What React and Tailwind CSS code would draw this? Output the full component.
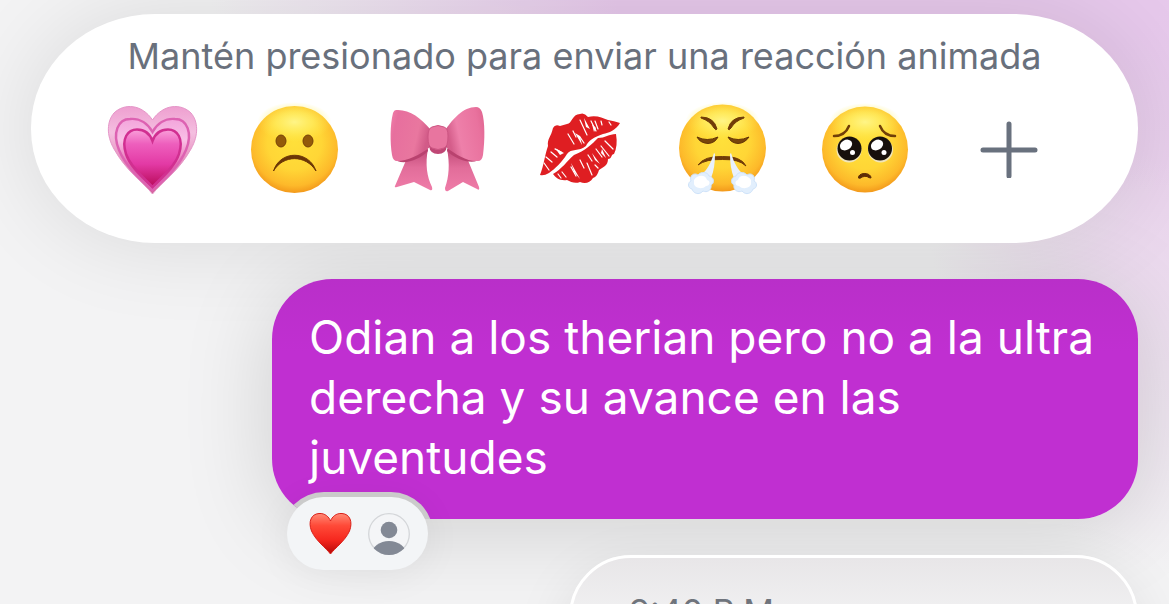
import { useState } from 'react';

function GrowingHeart() {
  return (
    <svg viewBox="87 90 130 115" className="w-[130px] h-[115px]" aria-hidden="true">
      <defs>
        <linearGradient id="gh1" x1="0" y1="0" x2="0" y2="1">
          <stop offset="0" stopColor="#ee9fd0" />
          <stop offset="0.3" stopColor="#f4bfe0" />
          <stop offset="0.6" stopColor="#e893c0" />
          <stop offset="1" stopColor="#d4659a" />
        </linearGradient>
        <linearGradient id="gh2" x1="0" y1="0" x2="0" y2="1">
          <stop offset="0" stopColor="#f3a5dc" />
          <stop offset="0.3" stopColor="#f9c0e6" />
          <stop offset="0.6" stopColor="#e876b8" />
          <stop offset="1" stopColor="#c91c70" />
        </linearGradient>
        <linearGradient id="gh3" x1="0" y1="0" x2="0" y2="1">
          <stop offset="0" stopColor="#f9a0da" />
          <stop offset="0.25" stopColor="#ee5fbd" />
          <stop offset="0.6" stopColor="#e33aa5" />
          <stop offset="1" stopColor="#b80a58" />
        </linearGradient>
      </defs>
      <path d="M152.500 194C144 183 126 171 114 149C106 135 107 121 114 113C124 103 142 104 152.500 120C163 104 181 103 191 113C198 121 199 135 191 149C179 171 161 183 152.500 194Z" fill="url(#gh1)" stroke="#e596c8" strokeWidth="1" />
      <path d="M152.500 190C144 182 127 169 119 150C112 133 118 119 130 119C140 118 148 124 152.500 132C157 124 165 118 175 119C187 119 193 133 186 150C178 169 161 182 152.500 190Z" fill="url(#gh2)" stroke="#dd62b2" strokeWidth="2.500" />
      <path d="M152.500 187C147 180 131 169 126 154C121 138 128 129.500 137 129.500C145 129.500 150 134 152.500 141C155 134 160 129.500 168 129.500C177 129.500 184 138 179 154C174 169 158 180 152.500 187Z" fill="url(#gh3)" stroke="#d12f91" strokeWidth="2.500" />
    </svg>
  );
}

function FaceGradient({ id }) {
  return (
    <>
      <radialGradient id={id} cx="0.5" cy="0.42" r="0.62">
        <stop offset="0" stopColor="#ffe03a" />
        <stop offset="0.5" stopColor="#ffd636" />
        <stop offset="0.8" stopColor="#fdb92a" />
        <stop offset="1" stopColor="#ee8a14" />
      </radialGradient>
      <radialGradient id={`${id}-shine`}>
        <stop offset="0" stopColor="#fff890" stopOpacity="0.9" />
        <stop offset="0.5" stopColor="#fff36a" stopOpacity="0.6" />
        <stop offset="1" stopColor="#ffee50" stopOpacity="0" />
      </radialGradient>
    </>
  );
}

function FrownFace() {
  return (
    <svg viewBox="235 90 120 115" className="w-[120px] h-[115px]" aria-hidden="true">
      <defs><FaceGradient id="frown" /></defs>
      <circle cx="294.500" cy="149.500" r="43.500" fill="url(#frown)" />
      <ellipse cx="294.500" cy="122" rx="37" ry="20" fill="url(#frown-shine)" />
      <g fill="#935a0a" stroke="#754006" strokeWidth="1">
        <ellipse cx="281" cy="141" rx="5" ry="6" />
        <ellipse cx="308" cy="141" rx="5" ry="6" />
      </g>
      <path d="M273.500 171C280 150 309 150 316 171C306 154.500 283 154.500 273.500 171Z" fill="#6b3606" stroke="#6b3606" strokeWidth="1" strokeLinejoin="round" />
    </svg>
  );
}

function Bow() {
  return (
    <svg viewBox="375 90 125 115" className="w-[125px] h-[115px]" aria-hidden="true">
      <defs>
        <linearGradient id="bowl" x1="0" y1="0" x2="1" y2="0.3">
          <stop offset="0" stopColor="#f27faa" />
          <stop offset="0.2" stopColor="#e76f9e" />
          <stop offset="0.75" stopColor="#e9779f" />
          <stop offset="1" stopColor="#d25b88" />
        </linearGradient>
        <linearGradient id="bowr" x1="1" y1="0" x2="0" y2="0.3">
          <stop offset="0" stopColor="#df648f" />
          <stop offset="0.25" stopColor="#e9729e" />
          <stop offset="0.75" stopColor="#ee80aa" />
          <stop offset="1" stopColor="#d45d8a" />
        </linearGradient>
        <linearGradient id="bowt" x1="0" y1="0" x2="0" y2="1">
          <stop offset="0" stopColor="#c14a78" />
          <stop offset="0.45" stopColor="#e26d9a" />
          <stop offset="1" stopColor="#ef7ca8" />
        </linearGradient>
      </defs>
      <path d="M407 158L395 186Q394 188 397 187L414 182L430 190Q433 191 432 187C427 177 425 164 428 149Z" fill="url(#bowt)" />
      <path d="M467 158L479 187Q480 191 477 189L463 182L448 191Q445 192 445 188C449 177 450 164 447 149Z" fill="url(#bowt)" />
      <path d="M394 158C400 167 420 160 428 151L427 146L396 156ZM481 158C475 166 456 160 447 151L448 146Z" fill="#b9426f" />
      <path d="M396 110C409 109 421 118 430 129L430 147C420 155 407 161 397 161Q393 161 392 155C390 142 390 125 393 113Q394 110 396 110Z" fill="url(#bowl)" />
      <path d="M476 107C463 107 453 119 446 129L446 147C456 155 468 162 478 161Q482 161 483 155C485 140 485 122 482 112Q480 107 476 107Z" fill="url(#bowr)" />
      <path d="M429 146Q430 154 438 154Q446 154 447 146Z" fill="#bf4775" />
      <path d="M432 127Q438 124 444 127Q448 128 448 136Q448 147 444 148Q438 151 432 148Q428 147 428 137Q428 128 432 127Z" fill="#e8759f" stroke="#cd5683" strokeWidth="1" />
    </svg>
  );
}

function Kiss() {
  return (
    <svg viewBox="525 90 110 115" className="w-[110px] h-[115px]" aria-hidden="true">
      <path d="M540 175C544 165 545 154 548 146C547 139 551 137 553 128Q555 124 560 126L567 124C572 124 572 114 580 114Q584 112 588 117C597 115 602 118 608 120Q614 121 620 123C616 130 609 133 603 134C594 137 588 141 586 146C579 152 571 148 567 154C562 162 555 169 549 173Q544 176 540 175Z" fill="#df1e22" />
      <path d="M553 174C562 169 567 161 574 155C585 151 592 144 598 138C605 138 609 134 616 134Q618 146 614 154C611 154 612 159 608 159C608 166 603 167 599 170C598 174 596 177 593 178C590 183 585 184 580 182C575 184 571 182 567 180C560 181 556 178 553 174Z" fill="#df1e22" />
      <g fill="none" stroke="#fff" strokeWidth="1.200" strokeLinecap="round">
        <path d="M580 120L587 135M591 121L596 131M595 121L598 129M601 121L602 125M573 131L576 137M568 134L574 144M555 149L561 152M551 152L557 157M546 157L552 162M544 163L549 170M580 137L584 143M609 122L611 125" />
        <path d="M605 141L613 149M601 146L609 156M596 149L602 157M588 155L592 161M587 163L592 175M580 160L584 168M571 167L576 176M562 172L566 177M595 165L598 168M558 174L561 178" />
      </g>
      <path d="M584 118L590 129L586 127ZM592 124L596 128L594 132ZM555 148L564 153L560 155ZM580 136L575 133L582 145ZM592 153L600 164L595 160ZM571 163L580 179L574 172ZM602 149L606 158L601 153Z" fill="#fff" />
    </svg>
  );
}

function Cloud({ flip }) {
  return (
    <g transform={flip ? 'translate(1445 0) scale(-1 1)' : undefined}>
      <path d="M714 153C711 163 707 170 702 174L711 178C714 171 715 162 715 154Z" fill="#e9f1fb" />
      <path d="M698 175C701 171 708 172 709 176C714 177 715 183 711 185C712 190 707 193 703 191C699 196 693 193 692 189C687 188 688 182 691 181C689 176 694 172 698 175Z" fill="#e2effd" stroke="#cfe3fa" strokeWidth="1" />
      <path d="M694 180C698 174 706 175 707 180C711 181 710 186 706 186C702 190 695 188 694 184Z" fill="#fff" />
    </g>
  );
}

function SteamFace() {
  return (
    <svg viewBox="663 90 120 115" className="w-[120px] h-[115px]" aria-hidden="true">
      <defs><FaceGradient id="steam" /></defs>
      <circle cx="722.500" cy="148" r="43.500" fill="url(#steam)" />
      <ellipse cx="722.500" cy="121" rx="37" ry="19" fill="url(#steam-shine)" />
      <path d="M701 117Q714 117 717 129Q716 131 714 128Q710 121 701 118ZM744 117Q731 117 728 129Q729 131 731 128Q735 121 744 118Z" fill="#713c08" stroke="#713c08" strokeWidth="1" strokeLinejoin="round" />
      <path d="M698 165Q704 156 722.500 156.500Q741 156 746 166Q739 159 722.500 159.500Q706 159 698 165Z" fill="#713c08" stroke="#713c08" strokeWidth="1" strokeLinejoin="round" />
      <path d="M697 137Q707 142 718 137Q715 143 708 143.500Q700 143 697 137ZM728 137Q738 142 749 137Q745 143 738 143.500Q731 143 728 137Z" fill="#79450b" stroke="#633506" strokeWidth="1" />
      <Cloud />
      <Cloud flip />
    </svg>
  );
}

function PleadingFace() {
  return (
    <svg viewBox="806 90 120 115" className="w-[120px] h-[115px]" aria-hidden="true">
      <defs><FaceGradient id="plead" /></defs>
      <circle cx="865" cy="149.500" r="43" fill="url(#plead)" />
      <ellipse cx="865" cy="122" rx="36" ry="19" fill="url(#plead-shine)" />
      <path d="M834 136Q845 136 849 126M895 136Q884 136 880 126" fill="none" stroke="#713f08" strokeWidth="2.500" strokeLinecap="round" />
      <g fill="#f1e5b9">
        <circle cx="849" cy="150" r="12.500" />
        <circle cx="880.500" cy="150" r="12.500" />
      </g>
      <g fill="#17100c">
        <circle cx="849.500" cy="148.500" r="12" />
        <circle cx="880" cy="148.500" r="12" />
      </g>
      <g fill="#fff">
        <ellipse cx="846" cy="145" rx="6.500" ry="5" transform="rotate(-30 846 145)" />
        <ellipse cx="877" cy="145" rx="6.500" ry="5" transform="rotate(-30 877 145)" />
        <circle cx="852.500" cy="152.500" r="2.500" />
        <circle cx="884" cy="152.500" r="2.500" />
      </g>
      <path d="M858.500 178C858 172 871 172 871 178Q869 178 867 176.500Q865 176 862 177Q860 179 858.500 178Z" fill="#5e2d06" stroke="#5e2d06" strokeWidth="1" />
    </svg>
  );
}

function RedHeart() {
  return (
    <svg viewBox="309 512 43 43" className="w-[43px] h-[43px]" aria-hidden="true">
      <defs>
        <linearGradient id="rh" x1="0" y1="0" x2="0" y2="1">
          <stop offset="0" stopColor="#ff8a76" />
          <stop offset="0.3" stopColor="#ff4a38" />
          <stop offset="0.65" stopColor="#f6281f" />
          <stop offset="1" stopColor="#b50808" />
        </linearGradient>
      </defs>
      <path d="M330.500 554C326 548 316 541 311.500 531C308 522 311 514 319 513.500C325 513 329 517 330.500 521C332 517 336 513 342 513.500C350 514 353 522 349.500 531C345 541 335 548 330.500 554Z" fill="url(#rh)" stroke="#d92019" strokeWidth="1" />
    </svg>
  );
}

function Avatar() {
  return (
    <svg viewBox="0 0 42 42" className="w-[42px] h-[42px]" aria-hidden="true">
      <defs><clipPath id="avatar-clip"><circle cx="21" cy="21" r="21" /></clipPath></defs>
      <circle cx="21" cy="21" r="20.300" fill="#f4f5f7" stroke="#d4d6d9" strokeWidth="1.300" />
      <g fill="#838995" clipPath="url(#avatar-clip)">
        <circle cx="21" cy="17" r="8.300" />
        <ellipse cx="21" cy="41" rx="17" ry="13" />
      </g>
    </svg>
  );
}

const reactions = [
  { name: 'Corazón creciente', Icon: GrowingHeart },
  { name: 'Cara triste', Icon: FrownFace },
  { name: 'Lazo', Icon: Bow },
  { name: 'Beso', Icon: Kiss },
  { name: 'Cara resoplando', Icon: SteamFace },
  { name: 'Cara suplicante', Icon: PleadingFace },
];

function ReactionPicker({ onPick }) {
  return (
    <section className="relative z-10 rounded-[124px/114px] bg-white pt-5 pb-[38px] shadow-[0_0_90px_rgba(0,0,0,0.11)]">
      <p className="text-center text-[36px] leading-[44px] text-[#69707c]">
        Mantén presionado para enviar una reacción animada
      </p>
      <div className="mt-3 grid grid-cols-7 pl-[50px] pr-[58px]">
        {reactions.map(({ name, Icon }) => (
          <button key={name} type="button" aria-label={name} onClick={() => onPick(name)} className="flex h-[115px] items-center justify-center">
            <Icon />
          </button>
        ))}
        <button type="button" aria-label="Más reacciones" className="flex h-[115px] items-center justify-center">
          <svg viewBox="0 0 60 60" className="h-[60px] w-[60px]" fill="none" stroke="#69717e" strokeWidth="5" strokeLinecap="round">
            <path d="M30 6V58M4 32H56" />
          </svg>
        </button>
      </div>
    </section>
  );
}

function Message({ children }) {
  return (
    <div className="relative mt-9 ml-[241px]">
      {/* z-20 deja la burbuja sobre la sombra del selector; su propia sombra queda debajo */}
      <div className="absolute inset-0 rounded-[60px] shadow-[0_10px_90px_rgba(0,0,0,0.15)]" />
      <div className="relative z-20 overflow-hidden rounded-[60px] bg-linear-to-b from-[#b92fc9] to-[#c02fd1] to-30%">
        <p className="pt-[28px] pr-8 pb-[32px] pl-[37px] text-[46px] leading-[60px] text-white">{children}</p>
        {/* recorte alrededor de la reacción */}
        <div className="absolute -bottom-[57px] left-[10px] h-[84px] w-[151px] rounded-[42px] bg-[#cfcfcf]" />
      </div>
      <button type="button" aria-label="Ver reacciones" className="absolute z-20 -bottom-[51px] left-[15px] flex h-[73px] w-[141px] items-center justify-between rounded-full bg-[#f3f5f7] pr-[18px] pl-[22px] shadow-[0_4px_40px_rgba(0,0,0,0.06)]">
        <RedHeart />
        <Avatar />
      </button>
    </div>
  );
}

export default function App() {
  const [, setPicked] = useState('');

  return (
    <main className="h-screen overflow-hidden bg-[#f3f3f4] bg-[radial-gradient(ellipse_58%_34%_at_76%_0%,#e6c8eb_40%,transparent_100%),radial-gradient(ellipse_22%_85%_at_100%_10%,#e9d2ec_20%,transparent_100%)] px-[31px] pt-[14px] font-['Inter','Liberation_Sans',sans-serif]">
      <ReactionPicker onPick={setPicked} />
      <Message>Odian a los therian pero no a la ultra derecha y su avance en las juventudes</Message>

      <div className="relative z-10 mt-9 ml-[538px] rounded-[62px] border-[3px] border-white bg-linear-to-b from-[#e8e6e8] to-[#f1f1f2] to-[60px] px-[57px] pt-8 pb-12 shadow-[0_20px_60px_rgba(0,0,0,0.1)]">
        <p className="text-[34px] leading-[44px] text-[#6f747c]">9:40 P.M.</p>
      </div>
    </main>
  );
}
